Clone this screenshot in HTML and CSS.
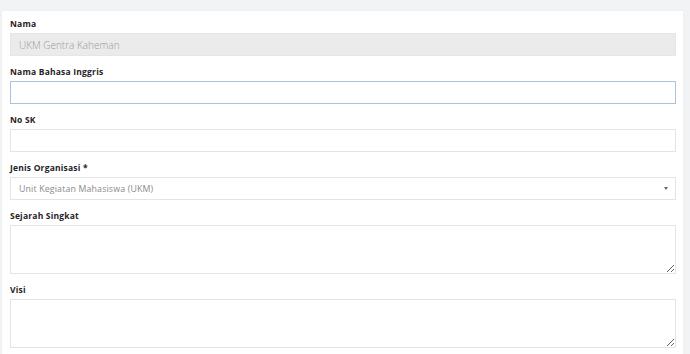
FILE: index.html
```html
<!DOCTYPE html>
<html lang="id">
<head>
    <meta charset="UTF-8">
    <meta name="viewport" content="width=device-width, initial-scale=1.0">
    <title>Profil Organisasi</title>
    <link rel="stylesheet" href="styles.css">
</head>
<body>
    <div class="card">
        <form class="form">
            <div class="form-group">
                <label>Nama</label>
                <input type="text" class="form-control" value="UKM Gentra Kaheman" disabled>
            </div>
            <div class="form-group">
                <label>Nama Bahasa Inggris</label>
                <input type="text" class="form-control focused">
            </div>
            <div class="form-group">
                <label>No SK</label>
                <input type="text" class="form-control">
            </div>
            <div class="form-group">
                <label>Jenis Organisasi *</label>
                <div class="select-wrap">
                    <select class="form-control select">
                        <option>Unit Kegiatan Mahasiswa (UKM)</option>
                    </select>
                </div>
            </div>
            <div class="form-group">
                <label>Sejarah Singkat</label>
                <textarea class="form-control area"></textarea>
            </div>
            <div class="form-group">
                <label>Visi</label>
                <textarea class="form-control area"></textarea>
            </div>
        </form>
    </div>
</body>
</html>
```

FILE: styles.css
```css
body {
    margin: 0;
    background-color: #f2f3f5;
    font-family: "Open Sans", sans-serif;
    color: #222;
}
.card {
    margin: 11px 7px 0 2px;
    padding: 8px 7px 20px 8px;
    background-color: #fff;
    box-shadow: 0 0 3px rgba(0,0,0,0.04);
}
.form-group {
    margin-bottom: 11px;
}
.form-group label {
    display: block;
    font-size: 8.5px;
    font-weight: 700;
    line-height: 10px;
    letter-spacing: 0.2px;
    margin-bottom: 4px;
    color: #1f2326;
}
.form-control {
    display: block;
    box-sizing: border-box;
    width: 100%;
    height: 23px;
    margin: 0;
    padding: 0 8px;
    border: 1px solid #e3e4e6;
    border-radius: 0;
    background-color: #fff;
    font-family: "Open Sans", sans-serif;
    font-size: 10px;
    font-weight: 300;
    color: #8d8d8d;
    outline: none;
}
.form-control:disabled {
    background-color: #ebebeb;
    border-color: #e6e6e6;
    color: #9a9a9a;
}
.form-control.focused {
    border-color: #a8c4dc;
}
.select-wrap {
    position: relative;
}
.select {
    appearance: none;
    -webkit-appearance: none;
    font-size: 8.8px;
    font-weight: 400;
    letter-spacing: 0.15px;
    color: #8a8a8a;
}
.select-wrap::after {
    content: "";
    position: absolute;
    right: 8px;
    top: 10px;
    border-left: 2.5px solid transparent;
    border-right: 2.5px solid transparent;
    border-top: 3px solid #666;
}
.area {
    height: 49px;
    padding: 6px 8px;
    resize: vertical;
}
```
